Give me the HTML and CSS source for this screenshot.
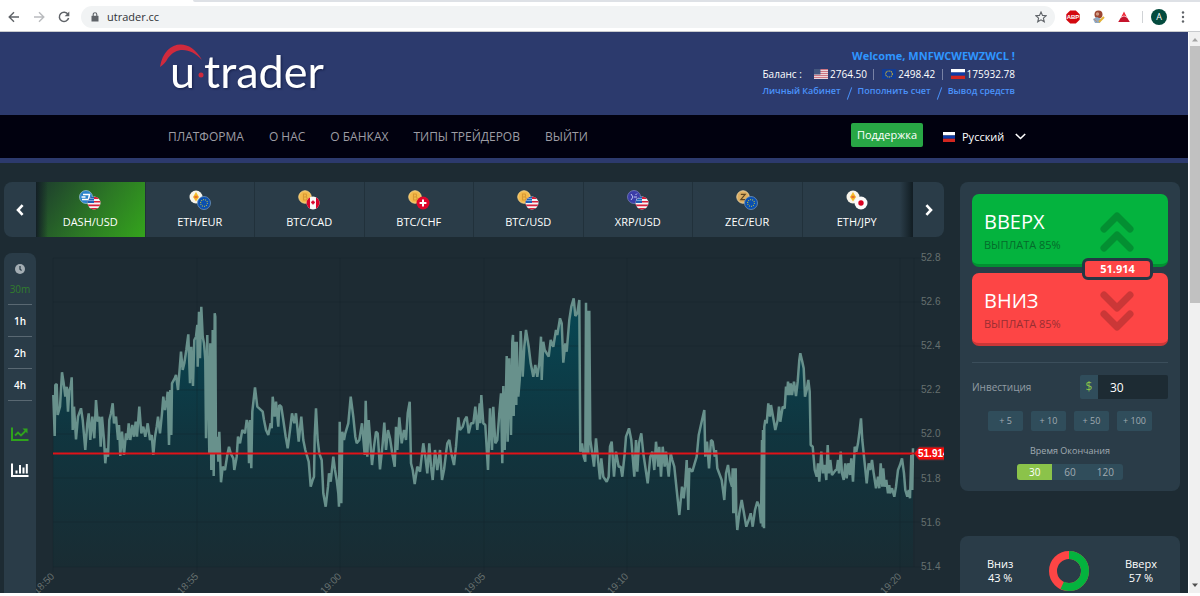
FILE: index.html
```html
<!DOCTYPE html>
<html lang="ru">
<head>
<meta charset="utf-8">
<title>utrader.cc</title>
<link rel="stylesheet" href="styles.css">
</head>
<body>
<svg class="defs" aria-hidden="true">
  <defs>
    <clipPath id="disc"><circle cx="7" cy="7" r="6.5"/></clipPath>
    <symbol id="usd" viewBox="0 0 14 14"><g clip-path="url(#disc)"><path fill="#f5f5f5" d="M0 0h14v14H0z"/><path fill="#d8203c" d="M0 1h14v2H0zM0 5h14v1.600H0zM0 8.600h14v1.600H0zM0 12h14v2H0z"/><path fill="#1f5fb5" d="M0 0h7v7H0z"/><path stroke="#cfe0f5" stroke-dasharray="1 1" d="M1.500 2.500h5M1.500 4.500h5"/></g></symbol>
    <symbol id="eur" viewBox="0 0 14 14"><circle cx="7" cy="7" r="6.500" fill="#0a4fb0" stroke="#6d93bd" stroke-width=".8"/><circle cx="7" cy="7" r="3.400" fill="none" stroke="#b5b943" stroke-width="1.100" stroke-dasharray="1 1.100"/></symbol>
    <symbol id="cad" viewBox="0 0 14 14"><g clip-path="url(#disc)"><path fill="#fafafa" d="M0 0h14v14H0z"/><path fill="#d9042b" d="M0 0h4v14H0zM10 0h4v14h-4zM7 4l1 1.500 1.300.2-1 1.800-1 .4V9h-.6V7.900l-1-.4-1-1.800L6 5.500z"/></g></symbol>
    <symbol id="chf" viewBox="0 0 14 14"><circle cx="7" cy="7" r="6.500" fill="#e0052c"/><path stroke="#fff" stroke-width="2" d="M7 3.600v6.800M3.600 7h6.800"/></symbol>
    <symbol id="jpy" viewBox="0 0 14 14"><circle cx="7" cy="7" r="6.500" fill="#fafafa"/><circle cx="7" cy="7" r="2.700" fill="#d80020"/></symbol>
    <symbol id="dash" viewBox="0 0 14 14"><circle cx="7" cy="7" r="6.500" fill="#2b83cb" stroke="#b9d3e8" stroke-width=".6"/><path fill="none" stroke="#fff" stroke-width="1.500" d="M4 4.500h6.500L9.500 9.500H3M2.500 7h4"/></symbol>
    <symbol id="eth" viewBox="0 0 14 14"><circle cx="7" cy="7" r="6.500" fill="#f7f4ea"/><path fill="#f6bd2c" d="M7 2l3 5-3 4.500L4 7z"/><path fill="#e8702a" d="M7 5.500L9.500 7 7 8.500 4.500 7z"/></symbol>
    <symbol id="btc" viewBox="0 0 14 14"><circle cx="7" cy="7" r="6.200" fill="#f3ba4d" stroke="#f8d384"/><path fill="none" stroke="#d99a33" stroke-width="1.200" d="M5.500 4H8q1.300 1.400 0 3H5.500H8.500q1.300 1.500 0 3h-3zM5.500 4v6"/></symbol>
    <symbol id="xrp" viewBox="0 0 14 14"><circle cx="7" cy="7" r="6.500" fill="#3b3da8" stroke="#8085c6" stroke-width=".7"/><path stroke="#c3c7f2" d="M4 4l2 3-2 3M7 7h3M10 3.500L8.500 5" fill="none"/><circle cx="10" cy="9.500" r="1" fill="#c3c7f2"/></symbol>
    <symbol id="zec" viewBox="0 0 14 14"><circle cx="7" cy="7" r="6.200" fill="#dcae62" stroke="#e7cd9b"/><path fill="none" stroke="#5d4522" stroke-width="1.200" d="M4.800 4.300h4.400L4.800 9.700h4.400"/></symbol>
    <symbol id="flag-ru" viewBox="0 0 13 10" preserveAspectRatio="none"><path fill="#fff" d="M0 0h13v3.500H0z"/><path fill="#0c3ba8" d="M0 3.500h13v3.300H0z"/><path fill="#d3261f" d="M0 6.700h13V10H0z"/></symbol>
    <symbol id="flag-us" viewBox="0 0 13 10" preserveAspectRatio="none"><path fill="#e9d5dc" d="M0 0h13v10H0z"/><path stroke="#cc7583" d="M0 .5h13M0 2.500h13M0 4.500h13M0 6.500h13M0 8.500h13"/><path fill="#44567e" d="M0 0h6v5.500H0z"/></symbol>
    <symbol id="flag-eu" viewBox="0 0 13 10" preserveAspectRatio="none"><path fill="#123c94" d="M0 0h13v10H0z"/><circle cx="6.500" cy="5" r="3.100" fill="none" stroke="#c9b23a" stroke-dasharray="1.200 .6"/></symbol>
  </defs>
</svg>

<div class="tabs"><div class="tab-active"></div><div class="tab-rest"></div></div>
<div class="toolbar">
  <button class="tool" aria-label="Назад"><svg width="12" height="12" viewBox="0 0 12 12" fill="none" stroke="#5f6368" stroke-width="1.400"><path d="M11 6H1.500M6 1.200L1.200 6 6 10.800"/></svg></button>
  <button class="tool" aria-label="Вперёд"><svg width="12" height="12" viewBox="0 0 12 12" fill="none" stroke="#b9bbbe" stroke-width="1.400"><path d="M1 6h9.500M6 1.200L10.800 6 6 10.800"/></svg></button>
  <button class="tool" aria-label="Обновить"><svg width="12" height="12" viewBox="0 0 12 12" fill="none" stroke="#5f6368" stroke-width="1.500"><path d="M10 3.300A4.700 4.700 0 1 0 10.600 7"/><path d="M11.300.6v4.600H6.700z" fill="#5f6368" stroke="none"/></svg></button>
  <div class="address">
    <svg width="8" height="10" viewBox="0 0 8 10"><path fill="#5f6368" d="M.5 3.800h7V9.500h-7z"/><path fill="none" stroke="#5f6368" stroke-width="1.100" d="M2.200 4V2.500a1.800 1.800 0 0 1 3.600 0V4"/></svg>
    <input type="text" aria-label="Адрес" value="utrader.cc">
    <svg width="12" height="12" viewBox="0 0 12 12"><path fill="none" stroke="#5f6368" stroke-width="1.100" d="M6 1l1.500 3.400 3.700.3-2.800 2.400.9 3.700L6 8.800l-3.300 2 .9-3.700L.8 4.700l3.700-.3z"/></svg>
  </div>
  <svg width="14" height="14" viewBox="0 0 14 14"><path fill="#d3090f" d="M4.200.5h5.600l3.900 3.700v5.600l-3.900 3.700H4.200L.3 9.800V4.200z"/><text x="7" y="9.300" text-anchor="middle" class="abp">ABP</text></svg>
  <svg width="14" height="14" viewBox="0 0 14 14"><circle cx="6.500" cy="4.500" r="4" fill="#9c4632"/><circle cx="5.500" cy="4" r="1.700" fill="#d39b83"/><path fill="#8fa9c4" d="M1 9l4-2 4 2-1 4H3z"/><path stroke="#e5b335" stroke-width="2" d="M7 12l5-5"/><path stroke="#b98c7c" d="M2 9l3 3"/></svg>
  <svg width="12" height="12" viewBox="0 0 12 12"><path fill="#ee2b3a" d="M6 0.500l2.800 5.500L6 4.600 3.200 6z"/><path fill="#c5132b" d="M2.800 6.800L6 5.300l3.200 1.500L11.800 11H.2z"/></svg>
  <span class="tool-divider"></span>
  <button class="avatar" aria-label="Профиль">A</button>
  <button class="tool" aria-label="Меню"><svg width="4" height="12" viewBox="0 0 4 12" fill="#5f6368"><circle cx="2" cy="1.500" r="1.200"/><circle cx="2" cy="6" r="1.200"/><circle cx="2" cy="10.500" r="1.200"/></svg></button>
</div>

<div class="window">
<div class="page">
  <header class="header">
    <div class="container header-row">
      <a href="#" class="logo" aria-label="u·trader"><svg width="170" height="64" viewBox="0 0 170 64">
        <path fill="#d02a3d" d="M0 23C4 -3 29 -8 42 16C31 4 17 2 8 14Q5 20 0 23z"/>
        <text class="logo-text" x="10" y="44">u</text>
        <circle cx="41" cy="31" r="2.500" fill="#d02a3d"/>
        <text class="logo-text" x="44" y="44">trader</text>
      </svg></a>
      <div class="account">
        <strong class="welcome">Welcome, MNFWCWEWZWCL !</strong>
        <div class="balances">
          <span class="balance-label">Баланс :</span>
          <span class="balance"><svg width="14" height="10"><use href="#flag-us"/></svg>2764.50</span>
          <span class="balance"><svg width="14" height="10"><use href="#flag-eu"/></svg>2498.42</span>
          <span class="balance"><svg width="14" height="10"><use href="#flag-ru"/></svg>175932.78</span>
        </div>
        <div class="links"><a href="#">Личный Кабинет</a><i></i><a href="#">Пополнить счет</a><i></i><a href="#">Вывод средств</a></div>
      </div>
    </div>
  </header>
  <nav class="nav">
    <div class="container nav-row">
      <a href="#">ПЛАТФОРМА</a><a href="#">О НАС</a><a href="#">О БАНКАХ</a><a href="#">ТИПЫ ТРЕЙДЕРОВ</a><a href="#">ВЫЙТИ</a>
      <button class="support">Поддержка</button>
      <label class="language"><svg width="12" height="10"><use href="#flag-ru"/></svg>
        <select aria-label="Язык"><option>Русский</option></select>
        <svg width="11" height="7" viewBox="0 0 11 7"><path fill="none" stroke="#fff" stroke-width="1.600" d="M.8 1l4.700 4.500L10.200 1"/></svg></label>
    </div>
  </nav>

  <main class="main">
    <section class="trading">
      <div class="carousel">
        <button class="arrow arrow-prev" aria-label="Предыдущие"><svg width="8" height="12" viewBox="0 0 8 12"><path fill="none" stroke="#fff" stroke-width="2.600" d="M6.600 1.200L2 6l4.600 4.800"/></svg></button>
        <div class="slides">
          <button class="slide slide-active"><svg class="coins" viewBox="0 0 22 20"><use href="#dash" width="14" height="14"/><use href="#usd" x="8" y="6" width="14" height="14"/></svg>DASH/USD</button>
          <button class="slide"><svg class="coins" viewBox="0 0 22 20"><use href="#eth" width="14" height="14"/><use href="#eur" x="8" y="6" width="14" height="14"/></svg>ETH/EUR</button>
          <button class="slide"><svg class="coins" viewBox="0 0 22 20"><use href="#btc" width="14" height="14"/><use href="#cad" x="8" y="6" width="14" height="14"/></svg>BTC/CAD</button>
          <button class="slide"><svg class="coins" viewBox="0 0 22 20"><use href="#btc" width="14" height="14"/><use href="#chf" x="8" y="6" width="14" height="14"/></svg>BTC/CHF</button>
          <button class="slide"><svg class="coins" viewBox="0 0 22 20"><use href="#btc" width="14" height="14"/><use href="#usd" x="8" y="6" width="14" height="14"/></svg>BTC/USD</button>
          <button class="slide"><svg class="coins" viewBox="0 0 22 20"><use href="#xrp" width="14" height="14"/><use href="#usd" x="8" y="6" width="14" height="14"/></svg>XRP/USD</button>
          <button class="slide"><svg class="coins" viewBox="0 0 22 20"><use href="#zec" width="14" height="14"/><use href="#eur" x="8" y="6" width="14" height="14"/></svg>ZEC/EUR</button>
          <button class="slide"><svg class="coins" viewBox="0 0 22 20"><use href="#eth" width="14" height="14"/><use href="#jpy" x="8" y="6" width="14" height="14"/></svg>ETH/JPY</button>
        </div>
        <button class="arrow arrow-next" aria-label="Следующие"><svg width="8" height="12" viewBox="0 0 8 12"><path fill="none" stroke="#fff" stroke-width="2.600" d="M1.400 1.200L6 6l-4.600 4.800"/></svg></button>
      </div>
      <div class="chart-row">
        <div class="periods">
          <svg class="clock" width="10" height="10" viewBox="0 0 10 10"><circle cx="5" cy="5" r="5" fill="#a3adb3"/><path fill="none" stroke="#2a3c48" stroke-width="1.300" d="M5 2v3.200l1.600 1.200"/></svg>
          <button class="period period-active">30m</button>
          <button class="period">1h</button>
          <button class="period">2h</button>
          <button class="period">4h</button>
          <button class="kind" aria-label="Линия"><svg width="18" height="14" viewBox="0 0 18 14" fill="none" stroke="#2fa31c" stroke-width="2"><path d="M1 .5V13h16.500"/><path stroke-width="1.800" d="M4 8.500l3-3 3 3L14.500 4"/><path fill="#2fa31c" stroke="none" d="M11.500 1.500h5v5z"/></svg></button>
          <button class="kind" aria-label="Свечи"><svg width="18" height="14" viewBox="0 0 18 14" fill="none" stroke="#fff" stroke-width="2"><path d="M1 .5V13h16.500M5.500 10.500V7.500M9 10.500V2M12.500 10.500V4.500M15.800 10.500V1"/></svg></button>
        </div>
        <svg class="chart" viewBox="36 253 908 340" role="img" aria-label="DASH/USD">
          <defs><linearGradient id="area" gradientUnits="userSpaceOnUse" x1="0" y1="300" x2="0" y2="567"><stop offset="0" stop-color="#064855"/><stop offset=".5" stop-color="#10353f"/><stop offset="1" stop-color="#192c33"/></linearGradient></defs>
          <path id="price-area" fill="url(#area)"/>
          <path class="grid" d="M53 258H920M53 302H920M53 346H920M53 390H920M53 434H920M53 478H920M53 522H920M53 567H920M53 258V572M197 258V572M340 258V572M484 258V572M627 258V572M900 258V572M914 258V567"/>
          <path id="price-line" class="price-line"/>
          <path class="current" d="M53 453.500H917"/>
          <g class="scale"><text x="921" y="261">52.8</text><text x="921" y="305">52.6</text><text x="921" y="349">52.4</text><text x="921" y="393">52.2</text><text x="921" y="437">52.0</text><text x="921" y="482">51.8</text><text x="921" y="526">51.6</text><text x="921" y="570">51.4</text></g>
          <g class="times"><text transform="translate(55 577) rotate(-45)">18:50</text><text transform="translate(199 577) rotate(-45)">18:55</text><text transform="translate(342 577) rotate(-45)">19:00</text><text transform="translate(486 577) rotate(-45)">19:05</text><text transform="translate(629 577) rotate(-45)">19:10</text><text transform="translate(902 577) rotate(-45)">19:20</text></g>
          <path fill="#f40b0b" stroke="#4d3038" d="M914 453.500l5-6.500h28v13h-28z"/>
          <text class="tag" x="918" y="457">51.914</text>
        </svg>
      </div>
    </section>

    <aside class="side">
      <section class="panel deal">
        <div class="bets">
          <button class="bet bet-up"><span><b>ВВЕРХ</b><small>ВЫПЛАТА 85%</small></span><svg width="34" height="40" viewBox="0 0 34 40"><path d="M4 17L17 4l13 13M4 36L17 23l13 13"/></svg></button>
          <button class="bet bet-down"><span><b>ВНИЗ</b><small>ВЫПЛАТА 85%</small></span><svg width="34" height="40" viewBox="0 0 34 40"><path d="M4 4l13 13L30 4M4 23l13 13 13-13"/></svg></button>
          <output class="price">51.914</output>
        </div>
        <div class="invest"><label for="amount">Инвестиция</label><span class="currency">$</span><input id="amount" type="text" value="30"></div>
        <div class="chips"><button>+ 5</button><button>+ 10</button><button>+ 50</button><button>+ 100</button></div>
        <fieldset class="expiry"><legend>Время Окончания</legend>
          <div class="segments">
            <label><input type="radio" name="expiry" checked><span>30</span></label>
            <label><input type="radio" name="expiry"><span>60</span></label>
            <label><input type="radio" name="expiry"><span>120</span></label>
          </div>
        </fieldset>
      </section>
      <section class="panel mood">
        <p>Вниз<br>43 %</p>
        <svg width="40" height="40" viewBox="0 0 40 40" fill="none" stroke-width="8"><circle cx="20" cy="20" r="16" stroke="#fd4545"/><circle cx="20" cy="20" r="16" stroke="#04b33e" pathLength="100" stroke-dasharray="57 43" transform="rotate(-90 20 20)"/></svg>
        <p>Вверх<br>57 %</p>
      </section>
    </aside>
  </main>
</div>
<div class="scrollbar" aria-hidden="true">
  <svg width="8" height="5" viewBox="0 0 8 5"><path fill="#a3a3a3" d="M1 4.500L4 1l3 3.500z"/></svg>
  <div class="thumb"></div>
  <svg width="8" height="5" viewBox="0 0 8 5"><path fill="#505050" d="M1 .5L4 4 7 .5z"/></svg>
</div>
</div>
<script src="chart.js"></script>
</body>
</html>
```
FILE: styles.css
```css
* { box-sizing: border-box; }
body {
  margin: 0;
  height: 100vh;
  padding-bottom: 3px;
  display: flex;
  flex-direction: column;
  overflow: hidden;
  background: #fff;
  font: 11px/16px "Open Sans", "Noto Sans", sans-serif;
  color: #fff;
}
button, input, select { font: inherit; color: inherit; border: 0; padding: 0; margin: 0; background: none; }
a { color: inherit; text-decoration: none; }
svg { display: block; flex: none; }
.defs { position: absolute; width: 0; height: 0; }

.tabs { display: flex; height: 2px; flex: none; }
.tab-active { width: 193px; }
.tab-rest { flex: 1; background: #dee1e6; border-bottom-left-radius: 2px; }
.toolbar {
  flex: none;
  display: flex;
  align-items: center;
  gap: 12px;
  height: 30px;
  padding: 0 15px 0 7px;
  border-bottom: 1px solid #c9cbce;
}
.tool { display: flex; justify-content: center; min-width: 4px; }
.toolbar > .tool:nth-child(-n+3) { width: 13px; }
.address {
  flex: 1;
  display: flex;
  align-items: center;
  gap: 8px;
  height: 22px;
  padding: 0 8px 0 10px;
  margin: 0 -1px;
  border-radius: 11px;
  background: #f1f3f4;
}
.address input { flex: 1; min-width: 0; color: #303236; outline: 0; }
.abp { font: bold 6px "Liberation Sans", sans-serif; fill: #fff; }
.tool-divider { width: 1px; height: 12px; background: #d0d3d6; }
.avatar { width: 16px; height: 16px; border-radius: 50%; background: #044b3e; font-size: 9px; line-height: 16px; margin: 0 2px 0 -4px; }

.window { flex: 1; min-height: 0; display: flex; }
.page { flex: 1; min-width: 0; overflow: hidden; display: flex; flex-direction: column; background: #1d2b33; }
.scrollbar {
  width: 12px;
  display: flex;
  flex-direction: column;
  align-items: center;
  gap: 4px;
  padding: 5px 0;
  border-left: 1px solid #fff;
  background: #f0f0f0;
}
.thumb { width: 10px; height: 257px; margin-bottom: auto; background: #c1c1c1; }

.container { width: 100%; max-width: 868px; margin: 0 auto; display: flex; }
.header { flex: none; background: #2c3a6d; }
.header-row { justify-content: space-between; padding: 12px 13px 0 0; height: 83px; }
.logo-text { font: 45px Lato, sans-serif; fill: #fff; filter: drop-shadow(1px 1px 1px #17204a); }
.account { display: flex; flex-direction: column; align-items: flex-end; padding-top: 3px; }
.welcome { color: #2f96ff; line-height: 18px; }
.balances { display: flex; align-self: stretch; justify-content: space-between; font-size: 10px; line-height: 18px; }
.balance { display: flex; align-items: center; gap: 2px; }
.balance-label { margin-right: 6px; }
.balance + .balance::before { content: ""; width: 1px; height: 11px; margin-right: 6px; background: #7882a5; }
.links { display: flex; align-self: stretch; justify-content: space-between; gap: 8px; font-size: 9px; font-weight: 600; color: #4a92fa; }
.links i { width: 1px; height: 13px; margin-top: 4px; background: #4a92fa; transform: rotate(20deg); }

.nav { flex: none; background: #01010f; border-bottom: 5px solid #2c3a6d; }
.nav-row { height: 43px; align-items: center; gap: 25px; padding: 0 2px 0 8px; font-size: 12px; color: #9d9da4; }
.support { margin-left: auto; height: 24px; width: 72px; border-radius: 2px; background: #28a745; color: #fff; margin-bottom: 3px; font-size: 11px; }
.language { display: flex; align-items: center; gap: 7px; margin-left: -5px; color: #fff; font-size: 11px; }
.language select { appearance: none; width: 46px; }

.main { flex: 1; min-height: 0; display: grid; grid-template-columns: minmax(0, 1fr) 220px; gap: 16px; padding: 19px 8px 0 4px; }
.trading { display: flex; flex-direction: column; gap: 16px; min-height: 0; }
.carousel { flex: none; display: flex; height: 55px; }
.arrow { width: 32px; display: flex; align-items: center; justify-content: center; background: #2a3c48; }
.arrow-prev { border-radius: 8px 0 0 8px; }
.arrow-next { border-radius: 0 8px 8px 0; border-left: 1px solid #131e25; }
.slides { flex: 1; display: flex; position: relative; }
.slides::before, .slides::after { content: ""; position: absolute; top: 0; bottom: 0; width: 12px; }
.slides::before { left: 0; background: linear-gradient(90deg, #131f25, transparent); }
.slides::after { right: 0; background: linear-gradient(270deg, #131f25, transparent); }
.slide { flex: 1; display: flex; flex-direction: column; align-items: center; gap: 4px; padding-top: 8px; background: #2a3c48; border-right: 1px solid #21313b; }
.slide-active { background: linear-gradient(125deg, #1d3a2e, #2c7825 55%, #34a41c); }
.coins { width: 22px; height: 20px; }

.chart-row { flex: 1; min-height: 0; display: flex; align-items: flex-start; }
.periods { width: 32px; height: 100%; flex: none; display: flex; flex-direction: column; align-items: center; padding: 11px 4px 0; border-radius: 8px 8px 0 0; background: #2a3c48; }
.period { width: 100%; height: 32px; font-size: 10px; font-weight: 600; border-bottom: 1px solid #596872; }
.period-active { color: #317c2d; font-weight: 400; }
.clock { margin-bottom: -1px; }
.kind { margin-top: 26px; }
.kind + .kind { margin-top: 22px; }
.chart { flex: 1; min-width: 0; }
.grid { fill: none; stroke: #14232a; stroke-opacity: .35; }
.price-line { fill: none; stroke: #68918c; stroke-width: 2.5; stroke-linejoin: bevel; }
.current { stroke: #e01218; stroke-width: 2; }
.scale, .times { font: 10px "Liberation Sans", sans-serif; fill: #66706f; }
.times { text-anchor: end; }
.tag { font: bold 10px "Liberation Sans", sans-serif; fill: #fff; }

.side { display: flex; flex-direction: column; gap: 45px; }
.panel { flex: none; background: #2a3c48; border-radius: 8px; }
.deal { padding: 12px 12px 11px; }
.bets { display: flex; flex-direction: column; gap: 6px; position: relative; padding-bottom: 16px; border-bottom: 1px solid #3b4e5b; }
.bet { display: flex; justify-content: space-between; align-items: center; height: 73px; padding: 6px 34px 0 12px; border-radius: 7px; text-align: left; }
.bet b { display: block; font-size: 20px; line-height: 26px; font-weight: 400; }
.bet small { display: block; font-size: 11px; line-height: 20px; }
.bet path { fill: none; stroke-width: 7; stroke-linecap: round; stroke-linejoin: round; }
.bet-up { background: #04b33e; border-bottom: 3px solid #038f32; }
.bet-up small { color: #046b2b; }
.bet-up path { stroke: #038f32; }
.bet-down { background: #fd4545; border-bottom: 3px solid #cb3737; }
.bet-down small { color: #982e32; }
.bet-down path { stroke: #cb3737; }
.price { position: absolute; right: 15px; top: 64px; width: 71px; height: 22px; border: 3px solid #253744; border-radius: 6px; background: #fd4545; text-align: center; font-weight: 700; }
.invest { display: flex; align-items: center; height: 24px; margin-top: 12px; font-size: 10px; color: #929da4; }
.invest label { margin-right: auto; }
.currency { width: 18px; line-height: 24px; text-align: center; font-size: 12px; background: #304d5b; color: #8bc34a; border-radius: 2px 0 0 2px; }
.invest input { width: 70px; height: 24px; padding-left: 12px; border-radius: 0 2px 2px 0; background: #1d2b33; color: #fff; font-size: 12px; }
.chips { display: flex; justify-content: center; gap: 8px; margin-top: 12px; }
.chips button { width: 35px; height: 20px; border-radius: 2px; background: #304d5b; color: #a0abb2; font-size: 9px; }
.expiry { border: 0; margin: 12px 0 0; padding: 0; font-size: 9px; color: #a0abb2; }
.expiry legend { margin: 0 auto 5px; padding: 0; }
.segments { display: flex; width: 106px; margin: 0 auto; border-radius: 3px; overflow: hidden; background: #304d5b; text-align: center; }
.segments label { flex: 1; position: relative; }
.segments input { appearance: none; position: absolute; inset: 0; }
.segments span { display: block; position: relative; font-size: 10px; }
.segments input:checked { background: #8bc34a; }
.segments input:checked + span { color: #fff; }
.mood { display: flex; align-items: center; justify-content: space-between; padding: 15px 23px 20px 27px; }
.mood p { margin: 0; line-height: 14px; text-align: center; }
```
FILE: chart.js
```js
// Price series: each run has an origin and points counted in thirds of a unit.
const runs = [
  { x: 0, y: 240, points: "160,465 164,588 166,435 170,432 173,525 180,500 186,397 191,430 196,470 200,440 204,515 208,450 212,440 215,412 218,570 222,500 228,598 234,530 243,505 248,540 256,630 262,550 266,520 271,600 277,530 283,595 288,480 293,545 298,530 302,620 306,530 312,600 316,670 320,625 324,650 328,540 333,520 338,490 342,550 348,530 354,600 357,555 361,648 366,575 372,645 378,580 382,600 386,550 391,600 397,555 402,590 407,545 411,590 418,500 424,580 430,560 436,590 443,550 450,600 455,585 460,645 465,590 470,560 474,530 480,580 486,520 490,470 495,510 500,480 503,455 507,615 511,450 514,585 516,430 524,415 528,405 534,450 543,335 548,390 553,370 559,330 565,283 570,430 574,320 579,438 583,300 588,290 592,255 593,380 597,215 600,355 604,200 608,290 612,310 616,360 618,595 622,285 628,640 631,310 634,690 636,600 638,270 641,708 644,220 646,230 648,640 652,590 655,665 658,575 663,727 668,680 675,690 682,645 687,620 692,640 700,655 703,690 710,650 714,590 720,610 727,570 735,580" },
  { x: 240, y: 280, points: "20,420 25,440 27,550 30,420 34,565 37,395 45,322 52,380 68,395 72,420 78,450 85,465 92,430 95,445 98,350 104,410 108,365 115,440 118,375 124,380 130,420 137,470 143,505 150,450 156,400 163,430 168,400 176,485 184,410 190,480 196,510 206,545 212,620 218,600 222,590 224,470 228,385 233,480 238,520 245,540 250,640 257,680 264,620 267,580 272,605 280,530 285,570 290,600 295,640 297,680 299,425 304,670 307,455 312,480 316,460 325,430 332,350 340,410 346,470 350,490 358,480 366,430 374,525 377,362 382,530 386,420 392,500 396,555 402,500 408,455 413,460 420,568 428,490 433,428 438,510 444,450 450,475 456,515 464,560 468,440 472,510 478,412 485,490 492,450 498,480 503,400 509,365 513,550 518,570 524,612 532,560 540,575 545,530 550,490 556,530 562,580 568,490 573,560 578,600 585,510 592,570 600,510 606,600 612,570 618,520 622,490 628,480 634,520 642,555 648,500 655,412 660,450 668,440 674,420 680,410 686,460 693,430 700,430 706,380 712,450 719,370" },
  { x: 470, y: 280, points: "31,430 34,345 40,430 46,435 54,570 60,385 66,510 70,380 76,490 82,480 88,400 93,340 97,550 100,318 104,510 110,228 113,485 118,235 123,465 127,185 129,165 131,408 134,185 139,375 140,185 145,350 149,300 152,153 158,290 163,200 168,150 176,200 182,250 190,290 196,255 202,290 208,250 213,170 215,300 220,185 224,210 236,230 242,180 250,200 258,150 262,165 270,115 275,130 280,248 286,190 290,215 298,120 304,80 311,55 316,108 322,100 328,60 331,515 336,490 341,530 346,545 348,68 351,520 352,92 355,520 358,92 361,480 368,530 372,560 378,475 383,530 390,598 394,535 400,590 410,605 416,590 420,500 425,485 432,590 438,515 446,560 452,560 457,590 464,520 468,470 477,445 484,480 493,590 498,480 502,575 507,490 514,460 520,520 533,610 541,530 547,515 553,570 558,485 565,560 568,500 573,590 578,500 584,560 588,515 596,590 602,520 607,540 613,560 620,630 628,705 636,620 641,655 645,620 650,540 655,690 658,565 667,575 674,550 680,530 686,465 694,430" },
  { x: 690, y: 330, points: "43,240 46,380 51,335 57,415 63,330 68,335 74,380 78,360 82,415 95,450 103,510 108,430 114,405 120,450 126,470 128,415 130,550 132,415 134,550 137,415 139,555 142,600 148,550 155,510 162,550 169,590 176,570 182,550 188,590 195,540 202,515 208,530 213,580 216,330 218,590 219,300 222,595 223,290 226,270 230,280 235,220 240,260 243,225 250,265 256,300 263,270 267,230 271,275 278,230 284,235 288,170 291,195 294,155 298,195 302,160 306,195 312,155 318,198 323,155 328,90 331,70 337,95 341,115 345,200 350,180 355,150 359,185 362,345 368,350 374,420 380,440 384,400 388,455 394,365 399,430 404,405 409,450 413,345 417,430 421,390 426,435 437,420 440,420 444,390 447,430 452,365 456,430 461,450 466,400 470,445 475,400 480,435 484,385 489,455 494,350 499,365 504,340 509,300 513,265 517,330 524,400 530,460 536,400 541,420 546,390 551,430 558,475 564,440 568,475 572,400 577,470 580,415 584,470 589,450 594,490 598,465 600,490 606,475 613,500 618,470 624,420 630,405 636,385 642,430 646,480 652,500 656,480 660,505 664,375 667,480 669,355" }
];

const line = runs.flatMap(run => run.points.split(" ").map(pair => {
  const [x, y] = pair.split(",").map(Number);
  return (run.x + x / 3).toFixed(1) + " " + (run.y + y / 3).toFixed(1);
})).join("L");

document.getElementById("price-line").setAttribute("d", "M" + line);
document.getElementById("price-area").setAttribute("d", "M53 567L" + line + "V567Z");
```
